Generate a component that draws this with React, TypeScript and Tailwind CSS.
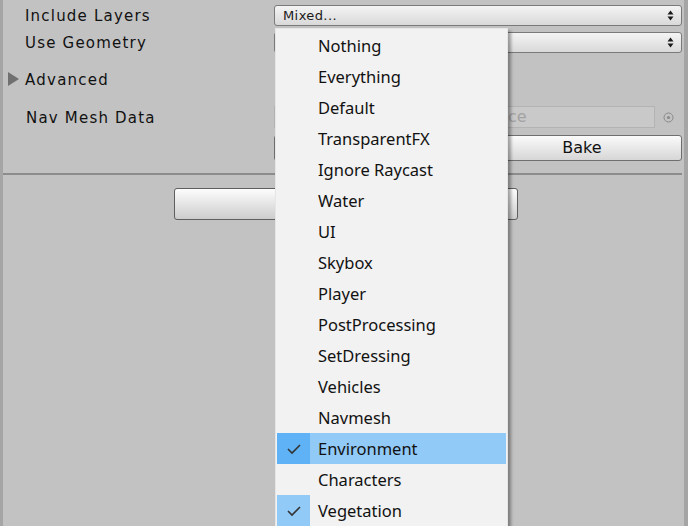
import React from 'react'

const layers = [
  { name: 'Nothing' },
  { name: 'Everything' },
  { name: 'Default' },
  { name: 'TransparentFX' },
  { name: 'Ignore Raycast' },
  { name: 'Water' },
  { name: 'UI' },
  { name: 'Skybox' },
  { name: 'Player' },
  { name: 'PostProcessing' },
  { name: 'SetDressing' },
  { name: 'Vehicles' },
  { name: 'Navmesh' },
  { name: 'Environment', checked: true, hover: true },
  { name: 'Characters' },
  { name: 'Vegetation', checked: true },
]

const UpDown = () => (
  <svg width="7" height="11" viewBox="0 0 7 11" className="shrink-0">
    <path d="M3.5 0.5 L6.5 4.5 L0.5 4.5 Z" fill="#1a1a1a" />
    <path d="M3.5 10.5 L6.5 6.5 L0.5 6.5 Z" fill="#1a1a1a" />
  </svg>
)

const Check = () => (
  <svg width="16" height="12" viewBox="0 0 16 12">
    <path d="M2 6 L6 10 L14 2" fill="none" stroke="#333" strokeWidth="1.6" />
  </svg>
)

const Popup = ({ label }: { label?: string }) => (
  <div className="flex-1 h-[21px] flex items-center justify-between pl-2 pr-[7px] rounded-[3px] border border-[#7a7a7a] bg-gradient-to-b from-[#f4f4f4] to-[#d9d9d9] text-[13px] tracking-[0.4px] text-[#1a1a1a]">
    <span>{label}</span>
    <UpDown />
  </div>
)

export default function App() {
  return (
    <div
      className="relative w-[688px] h-[526px] overflow-hidden bg-[#c2c2c2] border-l-[3px] border-r-[4px] border-[#a5a5a5]"
      style={{ fontFamily: '"DejaVu Sans", Verdana, sans-serif' }}
    >
      {/* Inspector fields */}
      <div className="flex flex-col pt-[5px] pr-[2px]">
        <div className="flex items-center h-[21px]">
          <span className="w-[271px] pl-[22px] pt-[2px] text-[15px] tracking-[1.2px] text-[#111]">Include Layers</span>
          <Popup label="Mixed..." />
        </div>
        <div className="flex items-center h-[21px] mt-[6px]">
          <span className="w-[271px] pl-[22px] pt-[2px] text-[15px] tracking-[1.2px] text-[#111]">Use Geometry</span>
          <Popup />
        </div>
        <div className="flex items-center h-[20px] mt-[16px]">
          <svg width="12" height="14" viewBox="0 0 12 14" className="ml-[5px] mr-[5px]">
            <path d="M0 0 L11 7 L0 14 Z" fill="#707070" />
          </svg>
          <span className="pt-[2px] text-[15px] tracking-[1.25px] text-[#111]">Advanced</span>
        </div>
        <div className="flex items-center h-[22px] mt-[17px]">
          <span className="w-[271px] pl-[23px] pt-[2px] text-[15px] tracking-[1.2px] text-[#111]">Nav Mesh Data</span>
          <div className="flex-1 h-[22px] border border-[#b3b3b3] bg-[#c9c9c9] text-[16px] text-[#a3a3a3] flex items-center pl-[233px]">
            ce
          </div>
          <div className="w-[27px] flex justify-center">
            <svg width="11" height="11" viewBox="0 0 11 11">
              <circle cx="5.5" cy="5.5" r="4.5" fill="none" stroke="#8a8a8a" strokeWidth="1" />
              <circle cx="5.5" cy="5.5" r="1.6" fill="#8a8a8a" />
            </svg>
          </div>
        </div>
        <div className="flex items-center h-[26px] mt-[7px] gap-[4px] pl-[271px]">
          <div className="flex-1 h-full rounded-[3px] border border-[#6f6f6f] bg-gradient-to-b from-[#fbfbfb] to-[#d6d6d6]" />
          <div className="w-[200px] h-full rounded-[3px] border border-[#6f6f6f] bg-gradient-to-b from-[#fbfbfb] to-[#d6d6d6] flex items-center justify-center text-[16px] text-[#111]">
            Bake
          </div>
        </div>
        <div className="mt-[12px] h-[2px] bg-[#8c8c8c]" />
        <div className="flex justify-start mt-[13px] pl-[171px]">
          <div className="w-[344px] h-[32px] rounded-[3px] border border-[#5f5f5f] bg-gradient-to-b from-[#fdfdfd] to-[#cdcdcd]" />
        </div>
      </div>

      {/* Layer mask menu */}
      <div className="absolute left-[272px] top-[28px] w-[233px] h-[510px] bg-[#f2f2f2] border border-[#e6e6e6] p-px shadow-[3px_3px_3px_rgba(0,0,0,0.35)]">
        <div
          className="flex flex-col"
          style={{ fontFamily: '"Noto Sans", "Open Sans", sans-serif' }}
        >
          {layers.map((layer) => (
            <div
              key={layer.name}
              className={
                'flex items-center h-[31px] ' + (layer.hover ? 'bg-[#91c9f7]' : '')
              }
            >
              <div
                className={
                  'w-[33px] h-full flex items-center justify-center ' +
                  (layer.hover ? 'bg-[#5eb2f5]' : layer.checked ? 'bg-[#91c9f7]' : '')
                }
              >
                {layer.checked && <Check />}
              </div>
              <span className="ml-[8px] pt-[2px] text-[16.5px] text-[#111]">{layer.name}</span>
            </div>
          ))}
        </div>
      </div>
    </div>
  )
}
